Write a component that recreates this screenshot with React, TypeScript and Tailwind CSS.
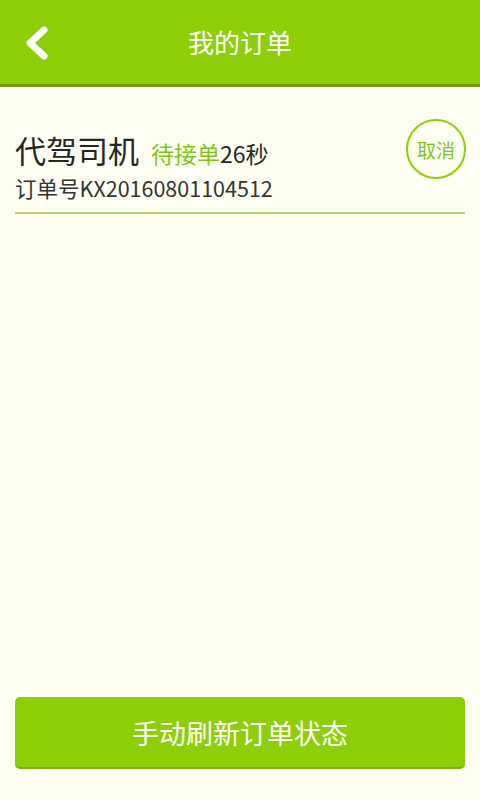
import React from "react";

const font = { fontFamily: '"Noto Sans CJK SC", "Liberation Sans", sans-serif' };

export default function App() {
  return (
    <div className="w-[480px] h-[800px] bg-[#fefff2] flex flex-col" style={font}>
      <div className="h-[87px] bg-[#8dce06] border-b-[3px] border-[#6f9f12] relative flex items-center justify-center shrink-0">
        <svg className="absolute left-[22px] top-[26px]" width="30" height="34" viewBox="0 0 30 34">
          <path d="M22 4 L8 17 L22 30" fill="none" stroke="#ffffff" strokeWidth="7" strokeLinecap="round" strokeLinejoin="round" />
        </svg>
        <span className="text-white text-[26px] leading-none">我的订单</span>
      </div>
      <div className="flex-1 flex flex-col px-[15px]">
        <div className="flex items-start justify-between pt-[46px] pb-[12px] border-b-2 border-[#a9da5e]">
          <div className="flex flex-col gap-[9px]">
            <div className="h-[34px] flex items-baseline leading-none">
              <span className="text-[31px] text-[#262626] leading-[34px]">代驾司机</span>
              <span className="text-[23px] text-[#7cc61a] leading-[34px] ml-[12px]">待接单</span>
              <span className="text-[23px] text-[#262626] leading-[34px]">26秒</span>
            </div>
            <span className="h-[24px] text-[21.5px] text-[#333333] leading-[24px]">订单号KX20160801104512</span>
          </div>
          <div className="w-[60px] h-[60px] rounded-full border-2 border-[#8dce06] flex items-center justify-center -mt-[14px] mr-[-1px]">
            <span className="text-[19px] text-[#7cc61a] leading-none">取消</span>
          </div>
        </div>
        <div className="flex-1" />
        <div className="mb-[31px] h-[72px] rounded-[5px] bg-[#8dce06] border-b-2 border-[#7bb10c] flex items-center justify-center">
          <span className="text-white text-[27px] leading-none">手动刷新订单状态</span>
        </div>
      </div>
    </div>
  );
}
